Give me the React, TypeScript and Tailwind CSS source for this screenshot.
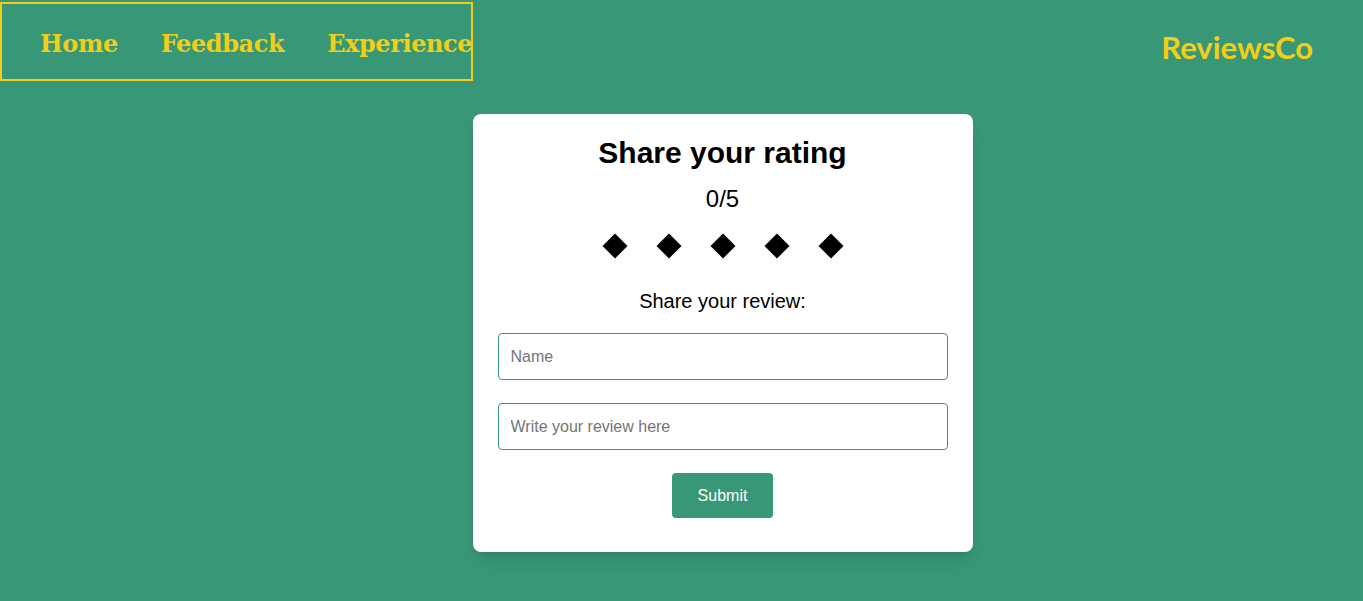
const navLinks = ["Home", "Feedback", "Experience"];

function Diamond() {
    return <svg width="26" height="26" viewBox="0 0 26 26">
        <path d="M13 0.5 L25.5 13 L13 25.5 L0.5 13 Z" fill="#000" />
    </svg>
}

export default function App() {
    return (
        <div className="min-h-[601px] bg-[#389776] font-['Liberation_Sans',Arial,sans-serif]">
            <header className="flex items-start justify-between">
                <nav className="mt-[2px] flex h-[79px] w-[473px] items-center gap-[43px] border-2 border-[#f2cf16] pl-[38px] pt-[4px]">
                    {navLinks.map((l) => (
                        <a key={l} href="#" className="whitespace-nowrap font-['DejaVu_Serif',Georgia,serif] text-[24px] font-bold tracking-[-0.4px] text-[#f2cf16]">
                            {l}
                        </a>
                    ))}
                </nav>
                <div className="mr-[50px] mt-[24px] font-['Lato',sans-serif] text-[31px] font-bold text-[#f2cf16]">
                    ReviewsCo
                </div>
            </header>

            <div className="mt-[33px] flex justify-center pl-[82px]">
                <div className="flex w-[500px] flex-col items-center rounded-lg bg-white px-[25px] pt-[20px] pb-[34px] shadow-lg">
                    <h1 className="text-[30px] font-bold leading-[38px] text-black">Share your rating</h1>
                    <div className="mt-[13px] text-[24px] leading-[28px] text-black">0/5</div>
                    <div className="mt-[20px] flex gap-[28px]">
                        {[0, 1, 2, 3, 4].map((i) => <Diamond key={i} />)}
                    </div>
                    <p className="mt-[30px] text-[20px] leading-[24px] text-black">Share your review:</p>
                    <input
                        placeholder="Name"
                        className="mt-[20px] h-[47px] w-full rounded border border-[#389776] px-3 text-[16px] text-black placeholder:text-[#757575] outline-none"
                    />
                    <input
                        placeholder="Write your review here"
                        className="mt-[23px] h-[47px] w-full rounded border border-[#389776] px-3 text-[16px] text-black placeholder:text-[#757575] outline-none"
                    />
                    <button className="mt-[23px] h-[45px] w-[101px] rounded bg-[#389776] text-[16px] text-white">
                        Submit
                    </button>
                </div>
            </div>
        </div>
    );
}
